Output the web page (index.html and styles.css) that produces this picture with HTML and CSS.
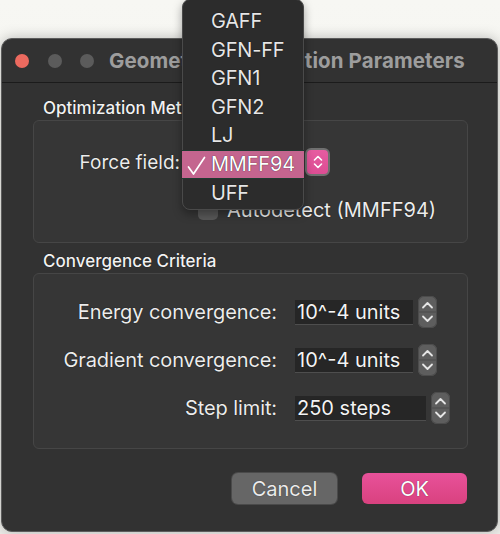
FILE: index.html
```html
<!DOCTYPE html>
<html>
<head>
<meta charset="utf-8">
<link rel="stylesheet" href="styles.css">
</head>
<body>
<div class="window">
  <div class="titlebar">
    <span class="light red"></span>
    <span class="light gray"></span>
    <span class="light gray"></span>
    <span class="title">Geometry Optimization Parameters</span>
  </div>
  <div class="content">
    <div class="section-label">Optimization Method</div>
    <div class="group group-method">
      <div class="ff-row">
        <span class="ff-label">Force field:</span>
        <div class="popup">
          <span class="popup-text">MMFF94</span>
          <span class="popup-stepper">
            <svg width="12" height="16" viewBox="0 0 12 16"><path d="M2.5 6 L6 2.5 L9.5 6 M2.5 10 L6 13.5 L9.5 10" fill="none" stroke="#fff" stroke-width="1.6" stroke-linecap="round" stroke-linejoin="round"/></svg>
          </span>
        </div>
      </div>
      <div class="check-row">
        <span class="checkbox"></span>
        <span class="check-text">Autodetect (MMFF94)</span>
      </div>
    </div>
    <div class="section-label second">Convergence Criteria</div>
    <div class="group group-conv">
      <div class="conv-row">
        <span class="conv-label">Energy convergence:</span>
        <span class="field">10^-4 units</span>
        <span class="stepper"><svg width="19" height="32" viewBox="0 0 19 32"><path d="M5 11.5 L9.5 7 L14 11.5" fill="none" stroke="#e6e6e6" stroke-width="1.8" stroke-linecap="round" stroke-linejoin="round"/><path d="M5 20.5 L9.5 25 L14 20.5" fill="none" stroke="#e6e6e6" stroke-width="1.8" stroke-linecap="round" stroke-linejoin="round"/><path d="M1 16 H18" stroke="#4a4a4a" stroke-width="1"/></svg></span>
      </div>
      <div class="conv-row">
        <span class="conv-label">Gradient convergence:</span>
        <span class="field">10^-4 units</span>
        <span class="stepper"><svg width="19" height="32" viewBox="0 0 19 32"><path d="M5 11.5 L9.5 7 L14 11.5" fill="none" stroke="#e6e6e6" stroke-width="1.8" stroke-linecap="round" stroke-linejoin="round"/><path d="M5 20.5 L9.5 25 L14 20.5" fill="none" stroke="#e6e6e6" stroke-width="1.8" stroke-linecap="round" stroke-linejoin="round"/><path d="M1 16 H18" stroke="#4a4a4a" stroke-width="1"/></svg></span>
      </div>
      <div class="conv-row">
        <span class="conv-label">Step limit:</span>
        <span class="field wide">250 steps</span>
        <span class="stepper"><svg width="19" height="32" viewBox="0 0 19 32"><path d="M5 11.5 L9.5 7 L14 11.5" fill="none" stroke="#e6e6e6" stroke-width="1.8" stroke-linecap="round" stroke-linejoin="round"/><path d="M5 20.5 L9.5 25 L14 20.5" fill="none" stroke="#e6e6e6" stroke-width="1.8" stroke-linecap="round" stroke-linejoin="round"/><path d="M1 16 H18" stroke="#4a4a4a" stroke-width="1"/></svg></span>
      </div>
    </div>
    <div class="buttons">
      <button class="btn cancel">Cancel</button>
      <button class="btn ok">OK</button>
    </div>
  </div>
</div>
<div class="menu">
  <div class="item">GAFF</div>
  <div class="item">GFN-FF</div>
  <div class="item">GFN1</div>
  <div class="item">GFN2</div>
  <div class="item">LJ</div>
  <div class="item selected"><svg class="check" width="19" height="20" viewBox="0 0 19 20"><path d="M1.5 11 L6.5 18 L17.5 1.5" fill="none" stroke="#ffffff" stroke-width="1.7" stroke-linecap="round" stroke-linejoin="round"/></svg>MMFF94</div>
  <div class="item">UFF</div>
</div>
</body>
</html>
```
FILE: styles.css
```css
html, body {
  margin: 0;
  padding: 0;
}
body {
  width: 500px;
  height: 534px;
  overflow: hidden;
  position: relative;
  background: linear-gradient(#f7f7f3, #efefeb);
  font-family: Inter, "Liberation Sans", sans-serif;
  color: #ececec;
}
.window {
  margin: 38px 0 0 1px;
  width: 497px;
  height: 494px;
  box-sizing: border-box;
  background: #323232;
  border: 1px solid #5c5c5c;
  border-radius: 11px;
  box-shadow: 0 0 14px rgba(0, 0, 0, 0.25);
  overflow: hidden;
}
.titlebar {
  height: 43px;
  border-bottom: 1px solid #1b1b1b;
  display: flex;
  align-items: center;
  padding-left: 13px;
}
.light {
  width: 14px;
  height: 14px;
  border-radius: 50%;
  margin-right: 18.5px;
  flex: none;
}
.light.red { background: #ec6a5f; }
.light.gray { background: #5b5b5b; }
.light:nth-child(3) { margin-right: 15px; }
.title {
  font-size: 20.5px;
  letter-spacing: 0.1px;
  font-weight: 700;
  color: #9d9d9d;
  white-space: nowrap;
}
.content {
  padding: 0 29px 0 31px;
  text-shadow: 0 0 1px rgba(0, 0, 0, 0.9);
}
.section-label {
  margin: 16px 0 3px 10px;
  font-size: 17px;
  line-height: 18px;
  font-weight: 500;
  color: #f2f2f2;
}
.section-label.second {
  margin-top: 9px;
}
.group {
  border: 1px solid #464646;
  border-radius: 6px;
  background: #363636;
}
.group-method {
  height: 123px;
  padding-top: 26px;
  box-sizing: border-box;
}
.ff-row {
  display: flex;
  align-items: center;
  height: 30px;
}
.ff-label {
  width: 146px;
  text-align: right;
  font-size: 19px;
  flex: none;
}
.popup {
  margin-left: 10px;
  width: 140px;
  height: 28px;
  display: flex;
  align-items: center;
  justify-content: space-between;
}
.popup-text {
  font-size: 20px;
  padding-left: 21px;
}
.popup-stepper {
  width: 21px;
  height: 24px;
  border-radius: 6px;
  background: linear-gradient(#e75ca1, #dc4d93);
  border: 2px solid #707070;
  display: flex;
  align-items: center;
  justify-content: center;
}
.check-row {
  display: flex;
  align-items: center;
  height: 22px;
  margin: 22px 0 0 164px;
}
.checkbox {
  width: 20px;
  height: 20px;
  border-radius: 5px;
  background: #585858;
  flex: none;
}
.check-text {
  margin-left: 9px;
  font-size: 20px;
}
.group-conv {
  padding: 22px 0 24px;
  display: flex;
  flex-direction: column;
  gap: 16px;
}
.conv-row {
  display: flex;
  align-items: center;
  height: 32px;
}
.conv-label {
  width: 243px;
  text-align: right;
  font-size: 20px;
  letter-spacing: -0.1px;
  flex: none;
  white-space: nowrap;
}
.field {
  margin-left: 18px;
  width: 118px;
  height: 25px;
  box-sizing: border-box;
  background: #262626;
  border-bottom: 1px solid #4e4e4e;
  font-size: 20px;
  line-height: 24px;
  padding-left: 2px;
  color: #f4f4f4;
  white-space: nowrap;
  overflow: hidden;
}
.field.wide { width: 131px; }
.stepper {
  margin-left: 5px;
  width: 19px;
  height: 32px;
  border-radius: 6px;
  background: #5e5e5e;
  box-shadow: inset 0 0 0 1px #4c4c4c;
  display: flex;
}
.buttons {
  display: flex;
  justify-content: flex-end;
  gap: 25px;
  margin-top: 24px;
  margin-right: 1px;
}
.btn {
  width: 105px;
  height: 31px;
  border: none;
  border-radius: 6px;
  font-family: Inter, "Liberation Sans", sans-serif;
  font-size: 20px;
  padding: 0;
  text-shadow: 0 0 1px rgba(0, 0, 0, 0.6);
}
.cancel {
  background: #666666;
  color: #ececec;
  box-shadow: 0 0 0 1px #4a4a4a;
}
.ok {
  background: linear-gradient(#e8519a, #d9427f);
  color: #ffffff;
}
.menu {
  position: absolute;
  left: 182px;
  top: -1px;
  width: 122px;
  height: 211px;
  box-sizing: border-box;
  padding-top: 7px;
  background: #2c2c2c;
  border: 1px solid #4a4a4a;
  border-radius: 8px;
  box-shadow: 0 4px 10px rgba(0, 0, 0, 0.35);
  text-shadow: 0 0 1px rgba(0, 0, 0, 0.9);
}
.item {
  height: 28.5px;
  line-height: 28.5px;
  padding-left: 28px;
  font-size: 20px;
  letter-spacing: -0.2px;
  color: #e6e6e6;
  position: relative;
}
.item.selected {
  margin: 0 -1px;
  padding-left: 29px;
  background: #c4658f;
  border-top: 1px solid #1f3a30;
  border-bottom: 1px solid #1f3a30;
  height: 27.5px;
  line-height: 27.5px;
  color: #ffffff;
}
.check {
  position: absolute;
  left: 5px;
  top: 5px;
}
```
